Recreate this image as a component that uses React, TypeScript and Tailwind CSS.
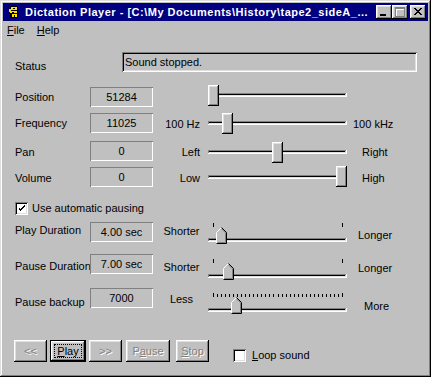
import React from "react";

const raised =
  "shadow-[inset_-1px_-1px_#000,inset_1px_1px_#fff,inset_-2px_-2px_#808080,inset_2px_2px_#dfdfdf]";
const field = "shadow-[inset_1px_1px_#808080,inset_-1px_-1px_#fff]";
const sunken =
  "shadow-[inset_1px_1px_#808080,inset_-1px_-1px_#fff,inset_2px_2px_#000,inset_-2px_-2px_#dfdfdf]";
const disabledText = "text-[#808080] [text-shadow:1px_1px_0_#fff]";

function Track({ y }: { y: number }) {
  return (
    <g shapeRendering="crispEdges">
      <rect x={3} y={y} width={139} height={4} fill="#c0c0c0" />
      <rect x={3} y={y} width={138} height={1} fill="#808080" />
      <rect x={3} y={y} width={1} height={3} fill="#808080" />
      <rect x={4} y={y + 1} width={136} height={1} fill="#000" />
      <rect x={4} y={y + 1} width={1} height={2} fill="#000" />
      <rect x={4} y={y + 2} width={137} height={1} fill="#dfdfdf" />
      <rect x={3} y={y + 3} width={139} height={1} fill="#fff" />
      <rect x={141} y={y} width={1} height={4} fill="#fff" />
    </g>
  );
}

function RectSlider({ thumb, top, track }: { thumb: number; top: number; track: number }) {
  return (
    <svg width={145} height={20} className="shrink-0 overflow-visible">
      <Track y={track} />
      <g shapeRendering="crispEdges" transform={`translate(${thumb} ${top})`}>
        <rect x={0} y={0} width={11} height={21} fill="#c0c0c0" />
        <rect x={0} y={0} width={10} height={1} fill="#fff" />
        <rect x={0} y={0} width={1} height={20} fill="#fff" />
        <rect x={1} y={1} width={8} height={1} fill="#dfdfdf" />
        <rect x={1} y={1} width={1} height={18} fill="#dfdfdf" />
        <rect x={10} y={0} width={1} height={21} fill="#000" />
        <rect x={0} y={20} width={11} height={1} fill="#000" />
        <rect x={9} y={1} width={1} height={19} fill="#808080" />
        <rect x={1} y={19} width={9} height={1} fill="#808080" />
      </g>
    </svg>
  );
}

function PointSlider({ thumb, t, many }: { thumb: number; t: number; many?: boolean }) {
  const ticks: number[] = [];
  if (many) {
    for (let i = 0; i <= 32; i++) ticks.push(Math.round(8 + (i * 129) / 32));
  } else {
    ticks.push(8, 137);
  }
  return (
    <svg width={145} height={20} className="shrink-0 overflow-visible">
      <g shapeRendering="crispEdges">
        {ticks.map((x, i) => (
          <rect
            key={i}
            x={x}
            y={t + (many && i !== 0 && i !== ticks.length - 1 ? 1 : 0)}
            width={1}
            height={many && i !== 0 && i !== ticks.length - 1 ? 3 : 4}
            fill="#000"
          />
        ))}
      </g>
      <Track y={t + 15} />
      <g transform={`translate(${thumb} ${t + 4})`}>
        <polygon points="0,5 5,0 11,6 11,17 0,17" fill="#c0c0c0" />
        <polyline points="0.5,16.5 0.5,5.5 5.5,0.5" stroke="#fff" fill="none" />
        <polyline points="5.5,0.5 10.5,5.5 10.5,16.5 0.5,16.5" stroke="#000" fill="none" />
        <polyline points="5.5,1.9 9.5,5.9 9.5,15.5 1.5,15.5" stroke="#808080" fill="none" />
      </g>
    </svg>
  );
}

function Box({ children }: { children: React.ReactNode }) {
  return (
    <div className={`w-[63px] h-[20px] shrink-0 flex items-center justify-center ${field}`}>
      {children}
    </div>
  );
}

function Check({ checked }: { checked?: boolean }) {
  return (
    <div className={`w-[13px] h-[13px] bg-white shrink-0 flex items-center justify-center ${sunken}`}>
      {checked && (
        <svg width={7} height={7} shapeRendering="crispEdges">
          <path d="M0 2h1v3h1v1h1v-1h1v-1h1v-1h1v-1h1v-2h-1v1h-1v1h-1v1h-1v1h-1v-1h-1v-1h-1z" fill="#000" />
        </svg>
      )}
    </div>
  );
}

function Btn({
  children,
  cls,
  def,
}: {
  children: React.ReactNode;
  cls: string;
  def?: boolean;
}) {
  return (
    <div
      className={`relative h-[22px] shrink-0 flex items-center justify-center bg-[#c0c0c0] ${raised} ${
        def ? "border border-black" : ""
      } ${cls}`}
    >
      {def && <div className="absolute inset-[3px] border border-dotted border-black" />}
      {children}
    </div>
  );
}

export default function App() {
  return (
    <div className="w-[431px] h-[377px] bg-[#c0c0c0] p-[3px] font-['Liberation_Sans',Arial,sans-serif] text-[11px] leading-[13px] text-black shadow-[inset_-1px_-1px_#000,inset_1px_1px_#dfdfdf,inset_-2px_-2px_#808080,inset_2px_2px_#fff] select-none">
      {/* Title bar */}
      <div className="h-[18px] bg-[#000080] flex items-center pl-[2px] pr-[2px]">
        <svg width={16} height={16} className="shrink-0" shapeRendering="crispEdges">
          <rect x={5} y={2} width={8} height={12} fill="#000" />
          <rect x={6} y={3} width={6} height={3} fill="#ffe000" />
          <rect x={5} y={7} width={7} height={2} fill="#ffe000" />
          <rect x={7} y={10} width={5} height={3} fill="#ffe000" />
          <rect x={4} y={5} width={2} height={3} fill="#ffe000" />
          <rect x={8} y={4} width={2} height={1} fill="#000" />
          <rect x={7} y={8} width={2} height={1} fill="#000" />
          <rect x={9} y={11} width={1} height={2} fill="#000" />
        </svg>
        <div className="ml-[4px] text-white font-bold whitespace-nowrap overflow-hidden flex-1 tracking-[0.5px]">
          Dictation Player - [C:\My Documents\History\tape2_sideA_...
        </div>
        <div className="flex items-center shrink-0">
          <div className={`w-[16px] h-[14px] bg-[#c0c0c0] ${raised} flex items-center justify-center`}>
            <svg width={16} height={14} shapeRendering="crispEdges">
              <rect x={4} y={9} width={6} height={2} fill="#000" />
            </svg>
          </div>
          <div className={`w-[16px] h-[14px] bg-[#c0c0c0] ${raised} flex items-center justify-center`}>
            <svg width={16} height={14} shapeRendering="crispEdges">
              <rect x={4} y={3} width={9} height={2} fill="#fff" />
              <rect x={4} y={3} width={1} height={9} fill="#fff" />
              <rect x={3} y={2} width={9} height={9} fill="none" stroke="#808080" strokeWidth={1} transform="translate(0.5 0.5)" />
              <rect x={3} y={3} width={9} height={1} fill="#808080" />
            </svg>
          </div>
          <div className={`ml-[2px] w-[16px] h-[14px] bg-[#c0c0c0] ${raised} flex items-center justify-center`}>
            <svg width={16} height={14} shapeRendering="crispEdges">
              <path
                d="M4 3h2v1h1v1h2v-1h1v-1h2v1h-1v1h-1v1h-1v1h1v1h1v1h1v1h-2v-1h-1v-1h-2v1h-1v1h-2v-1h1v-1h1v-1h1v-1h-1v-1h-1v-1h-1z"
                fill="#000"
              />
            </svg>
          </div>
        </div>
      </div>

      {/* Menu */}
      <div className="h-[19px] flex items-center gap-[12px] pl-[4px]">
        <span>
          <span className="underline underline-offset-[1px]">F</span>ile
        </span>
        <span>
          <span className="underline underline-offset-[1px]">H</span>elp
        </span>
      </div>

      {/* Status */}
      <div className="flex h-[20px] mt-[12px] pl-[12px]">
        <div className="w-[107px] pt-[8px] shrink-0">Status</div>
        <div className={`w-[295px] h-[20px] flex items-center pl-[3px] ${sunken}`}>Sound stopped.</div>
      </div>

      {/* Position */}
      <div className="flex h-[20px] mt-[15px] pl-[12px]">
        <div className="w-[75px] pt-[4px] shrink-0">Position</div>
        <Box>51284</Box>
        <div className="w-[52px] shrink-0" />
        <RectSlider thumb={3} top={-2} track={6} />
      </div>

      {/* Frequency */}
      <div className="flex h-[20px] mt-[6px] pl-[12px]">
        <div className="w-[75px] pt-[4px] shrink-0">Frequency</div>
        <Box>11025</Box>
        <div className="w-[52px] shrink-0 pt-[5px] pr-[5px] text-right whitespace-nowrap">100 Hz</div>
        <RectSlider thumb={17} top={0} track={8} />
        <div className="ml-[3px] pt-[5px] whitespace-nowrap">100 kHz</div>
      </div>

      {/* Pan */}
      <div className="flex h-[20px] mt-[8px] pl-[12px]">
        <div className="w-[75px] pt-[5px] shrink-0">Pan</div>
        <Box>0</Box>
        <div className="w-[52px] shrink-0 pt-[5px] pr-[5px] text-right">Left</div>
        <RectSlider thumb={67} top={1} track={9} />
        <div className="ml-[12px] pt-[5px]">Right</div>
      </div>

      {/* Volume */}
      <div className="flex h-[20px] mt-[6px] pl-[12px]">
        <div className="w-[75px] pt-[5px] shrink-0">Volume</div>
        <Box>0</Box>
        <div className="w-[52px] shrink-0 pt-[5px] pr-[5px] text-right">Low</div>
        <RectSlider thumb={131} top={-1} track={8} />
        <div className="ml-[12px] pt-[5px]">High</div>
      </div>

      {/* Auto pausing */}
      <div className="flex items-center h-[13px] mt-[15px] pl-[12px] gap-[4px]">
        <Check checked />
        <span>Use automatic pausing</span>
      </div>

      {/* Play Duration */}
      <div className="flex h-[20px] mt-[7px] pl-[12px]">
        <div className="w-[75px] pt-[2px] shrink-0 whitespace-nowrap">Play Duration</div>
        <Box>4.00 sec</Box>
        <div className="w-[52px] shrink-0 pt-[3px] pl-[5px] text-center">Shorter</div>
        <PointSlider thumb={11} t={1} />
        <div className="ml-[8px] pt-[7px]">Longer</div>
      </div>

      {/* Pause Duration */}
      <div className="flex h-[20px] mt-[12px] pl-[12px]">
        <div className="w-[75px] pt-[6px] shrink-0 whitespace-nowrap">Pause Duration</div>
        <Box>7.00 sec</Box>
        <div className="w-[52px] shrink-0 pt-[7px] pl-[5px] text-center">Shorter</div>
        <PointSlider thumb={18} t={5} />
        <div className="ml-[8px] pt-[8px]">Longer</div>
      </div>

      {/* Pause backup */}
      <div className="flex h-[20px] mt-[14px] pl-[12px]">
        <div className="w-[75px] pt-[8px] shrink-0 whitespace-nowrap">Pause backup</div>
        <Box>7000</Box>
        <div className="w-[52px] shrink-0 pt-[5px] pl-[5px] text-center">Less</div>
        <PointSlider thumb={26} t={5} many />
        <div className="ml-[14px] pt-[12px]">More</div>
      </div>

      {/* Buttons */}
      <div className="flex h-[22px] mt-[32px] pl-[11px]">
        <Btn cls="w-[33px]">
          <span className={disabledText}>&lt;&lt;</span>
        </Btn>
        <Btn cls="w-[36px] ml-[3px]" def>
          <span>
            <span className="underline">P</span>lay
          </span>
        </Btn>
        <Btn cls="w-[33px] ml-[3px]">
          <span className={disabledText}>&gt;&gt;</span>
        </Btn>
        <Btn cls="w-[44px] ml-[4px]">
          <span className={disabledText}>
            P<span className="underline">a</span>use
          </span>
        </Btn>
        <Btn cls="w-[33px] ml-[6px]">
          <span className={disabledText}>
            <span className="underline">S</span>top
          </span>
        </Btn>
        <div className="flex items-center gap-[6px] ml-[24px] pt-[9px] self-start">
          <Check />
          <span>
            <span className="underline">L</span>oop sound
          </span>
        </div>
      </div>
    </div>
  );
}
